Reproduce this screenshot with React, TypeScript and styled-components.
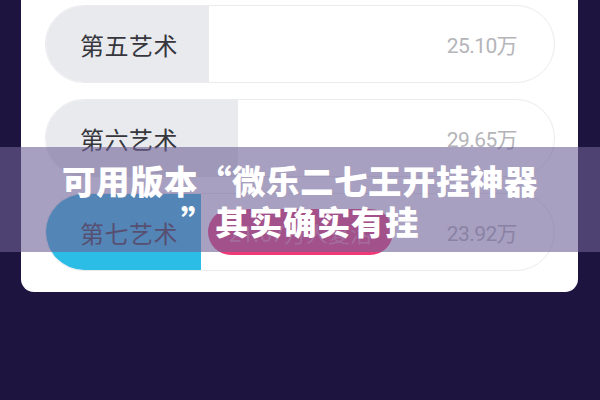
import React from "react";
import styled, { createGlobalStyle } from "styled-components";

const GlobalStyle = createGlobalStyle`
  html, body {
    margin: 0;
    padding: 0;
    background: #1e1440;
  }
  body {
    width: 600px;
    height: 400px;
    overflow: hidden;
    font-family: "Noto Sans CJK SC", "Noto Sans", sans-serif;
  }
`;

const Page = styled.div`
  position: relative;
  width: 600px;
  height: 400px;
  background: #1e1440;
`;

const Card = styled.div`
  margin: 0 22px 0 21px;
  padding: 5px 23px 21px 24px;
  background: #ffffff;
  border-radius: 0 0 13px 13px;
  display: flex;
  flex-direction: column;
  gap: 16px;
`;

const Row = styled.div`
  height: 78px;
  box-sizing: border-box;
  border: 1px solid #ebebee;
  border-radius: 39px;
  overflow: hidden;
  display: flex;
  align-items: center;
`;

const Fill = styled.div<{ $tone: "grey" | "blue" }>`
  height: 100%;
  flex: none;
  display: flex;
  align-items: center;
  background: ${(p) => (p.$tone === "blue" ? "#2cbde6" : "#e8eaee")};
`;

const Label = styled.span`
  padding-left: 34px;
  white-space: nowrap;
  font-size: 24px;
  color: #36363c;
  letter-spacing: 0.5px;
`;

const Badge = styled.div`
  margin-left: 7px;
  width: 185px;
  height: 46px;
  border-radius: 23px;
  background: #f03a78;
  display: flex;
  align-items: center;
  justify-content: center;
  font-family: Roboto, "Noto Sans CJK SC", sans-serif;
  font-size: 22px;
  color: rgba(255, 255, 255, 0.35);
`;

const Value = styled.span`
  margin-left: auto;
  padding-right: 37px;
  font-family: Roboto, "Noto Sans CJK SC", sans-serif;
  font-size: 21px;
  letter-spacing: -0.6px;
  color: #b4b4b9;
`;

const Banner = styled.div`
  position: absolute;
  left: 0;
  right: 0;
  top: 147px;
  height: 105px;
  box-sizing: border-box;
  padding-top: 12px;
  background: rgba(110, 96, 150, 0.6);
  text-align: center;
`;

const Title = styled.h1`
  margin: 0;
  font-family: "Noto Sans CJK SC", sans-serif;
  font-weight: 900;
  font-size: 33.5px;
  line-height: 41px;
  color: #ffffff;
  letter-spacing: 0.5px;
`;

type Item = { name: string; value: string; fill: number; tone: "grey" | "blue"; badge?: string };

const items: Item[] = [
  { name: "第五艺术", value: "25.10万", fill: 163, tone: "grey" },
  { name: "第六艺术", value: "29.65万", fill: 192, tone: "grey" },
  { name: "第七艺术", value: "23.92万", fill: 155, tone: "blue", badge: "21.67万人复活" },
];

export default function App() {
  return (
    <Page>
      <GlobalStyle />
      <Card>
        {items.map((it) => (
          <Row key={it.name}>
            <Fill $tone={it.tone} style={{ width: it.fill }}>
              <Label>{it.name}</Label>
            </Fill>
            {it.badge && <Badge>{it.badge}</Badge>}
            <Value>{it.value}</Value>
          </Row>
        ))}
      </Card>
      <Banner>
        <Title>
          可用版本“微乐二七王开挂神器
          <br />”其实确实有挂
        </Title>
      </Banner>
    </Page>
  );
}
